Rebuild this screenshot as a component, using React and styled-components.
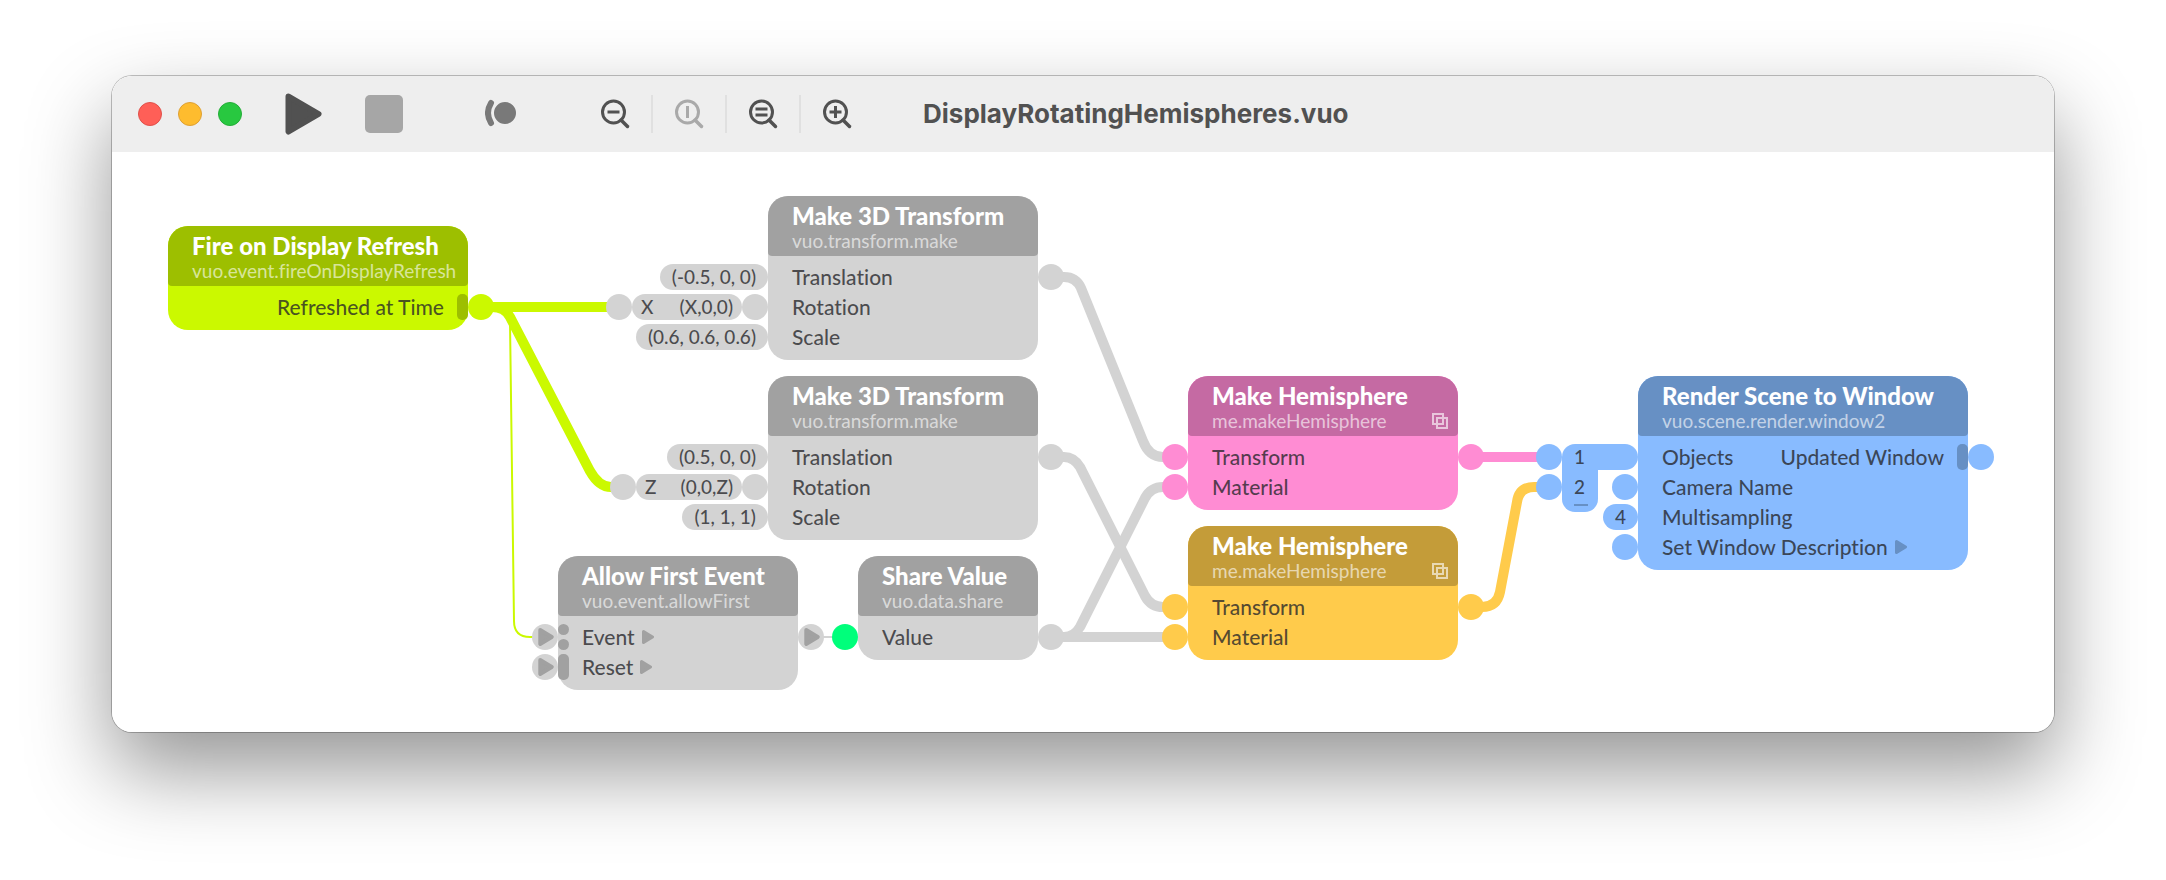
import React from "react";
import styled, { createGlobalStyle, css } from "styled-components";

const GlobalStyle = createGlobalStyle`
  * { box-sizing: border-box; }
  body { margin: 0; background: #ffffff; }
  button { margin: 0; padding: 0; border: 0; background: none; font: inherit; color: inherit; }
`;

const tints = {
  lime: { body: "#cbf900", head: "#9dbf00" },
  gray: { body: "#d3d3d3", head: "#a1a1a1" },
  pink: { body: "#ff8cd3", head: "#c56aa3" },
  amber: { body: "#ffcb4b", head: "#c49c39" },
  blue: { body: "#88bbff", head: "#6790c4" },
  green: { body: "#00ff7b", head: "#00c45e" },
};

const Page = styled.main`
  padding: 76px 112px 148px;
`;

const Window = styled.section`
  border-radius: 20px;
  overflow: clip;
  background: #ffffff;
`;

const WindowShadow = styled.div`
  border-radius: 20px;
  box-shadow: 0 0 0 1px rgba(0, 0, 0, 0.24), 0 38px 84px rgba(0, 0, 0, 0.42);
`;

const TitleBar = styled.header`
  display: flex;
  align-items: center;
  height: 76px;
  padding-left: 26px;
  background: #eeeeee;
  color: #515151;
`;

const TrafficLights = styled.div`
  display: flex;
  gap: 16px;
  margin-right: 43px;
`;

const Light = styled.button`
  width: 24px;
  height: 24px;
  border-radius: 50%;
  border: 1px solid ${(p) => p.$edge};
  background: ${(p) => p.$color};
`;

const ToolButton = styled.button`
  display: flex;
  align-items: center;
  justify-content: center;
  width: ${(p) => p.$width}px;
  height: 44px;
  color: ${(p) => p.$color || "#515151"};
`;

const RunControls = styled.div`
  display: flex;
  gap: 42px;
  margin-right: 82px;
`;

const ZoomGroup = styled.div`
  display: flex;
  margin-left: 62px;
`;

const ZoomButton = styled.button`
  display: flex;
  align-items: center;
  justify-content: center;
  width: 74px;
  height: 38px;
  border-right: 2px solid #e0e0e0;
  color: #515151;
  &:last-child { border-color: transparent; }
  &:disabled { color: #a9a9a9; }
`;

const Title = styled.h1`
  margin: 0 0 0 48px;
  font: 700 26px/32px Inter, "Liberation Sans", sans-serif;
  white-space: nowrap;
`;

const Canvas = styled.div`
  position: relative;
  min-height: 580px;
  font-family: Lato, "Open Sans", sans-serif;
  font-variant-ligatures: none;
`;

const Cables = styled.svg`
  position: absolute;
  left: 0;
  top: 0;
  overflow: visible;
  fill: none;
`;

const NodeBox = styled.article`
  position: absolute;
  left: ${(p) => p.$x}px;
  top: ${(p) => p.$y}px;
  width: ${(p) => p.$width}px;
  padding-bottom: 8px;
  border-radius: 20px;
  background: ${(p) => p.$tint.body};
`;

const NodeHead = styled.header`
  height: 60px;
  margin-bottom: 6px;
  padding: 7px 10px 0 24px;
  border-radius: 20px 20px 4px 4px;
  background: ${(p) => p.$tint.head};
  white-space: nowrap;
`;

const NodeTitle = styled.h2`
  margin: 0;
  font-size: 24px;
  line-height: 26px;
  font-weight: 900;
  color: #ffffff;
`;

const NodeClass = styled.div`
  display: flex;
  align-items: center;
  justify-content: space-between;
  font-size: 19px;
  line-height: 24px;
  color: rgba(255, 255, 255, 0.62);
`;

const Row = styled.div`
  position: relative;
  display: flex;
  justify-content: space-between;
  height: 30px;
  padding: 0 24px;
  font-size: 21px;
  line-height: 30px;
  font-weight: 500;
  white-space: nowrap;
  color: rgba(38, 38, 42, 0.78);
`;

const RowLabel = styled.span`
  display: flex;
  align-items: center;
  gap: 7px;
  ${(p) => p.$end && css`margin-left: auto;`}
`;

const Inputs = styled.div`
  position: absolute;
  right: 100%;
  top: 2px;
  display: flex;
  align-items: flex-start;
`;

const Outputs = styled.div`
  position: absolute;
  left: 100%;
  top: 2px;
  display: flex;
`;

const Port = styled.span`
  display: flex;
  flex: none;
  align-items: center;
  justify-content: center;
  width: 26px;
  height: 26px;
  padding-left: 2px;
  border-radius: 50%;
  background: ${(p) => p.$tint.body};
`;

const Pill = styled.span`
  display: flex;
  justify-content: space-between;
  width: ${(p) => (p.$width ? `${p.$width}px` : "auto")};
  height: 26px;
  padding: 0 ${(p) => (p.$width ? 9 : 12)}px;
  border-radius: 13px;
  background: ${(p) => p.$tint.body};
  font-size: 19px;
  line-height: 26px;
`;

const Door = styled.span`
  position: absolute;
  top: 2px;
  ${(p) => (p.$end ? "right: 0;" : "left: 0;")}
  width: 11px;
  height: 26px;
  border-radius: 5px;
  background: ${(p) => p.$tint.head};
`;

const SplitDoor = styled.span`
  position: absolute;
  top: 2px;
  left: 0;
  display: flex;
  flex-direction: column;
  justify-content: space-between;
  height: 26px;
  &::before, &::after {
    content: "";
    width: 11px;
    height: 11px;
    border-radius: 50%;
    background: ${(p) => p.$tint.head};
  }
`;

const ListPorts = styled.div`
  display: flex;
  flex-direction: column;
  gap: 4px;
`;

const ListBody = styled.ol`
  display: flex;
  flex-direction: column;
  gap: 4px;
  width: 36px;
  height: 68px;
  margin: 0;
  padding: 0 12px;
  list-style: none;
  border-radius: 13px 0 13px 13px;
  background: ${(p) => p.$tint.body};
  font-size: 19px;
  line-height: 26px;
  &::after {
    content: "";
    flex: none;
    width: 14px;
    height: 2px;
    background: ${(p) => p.$tint.head};
  }
`;

const ListItem = styled.li`
  height: 26px;
`;

const ListNeck = styled.span`
  width: 40px;
  height: 26px;
  border-radius: 0 13px 13px 0;
  background: ${(p) => p.$tint.body};
`;

const Arrow = ({ tint, width = 12, height = 14 }) => (
  <svg width={width} height={height} viewBox="0 0 12 14" aria-hidden="true">
    <path d="M1.5 1.5 10.5 7 1.5 12.5Z" fill={tint.head} stroke={tint.head} strokeWidth="3" strokeLinejoin="round" />
  </svg>
);

const CopyIcon = () => (
  <svg width="16" height="16" fill="none" stroke="currentColor" strokeWidth="2" aria-hidden="true">
    <path d="M1 1H11V11H1ZM5 5H15V15H5Z" />
  </svg>
);

const Magnifier = ({ children }) => (
  <svg width="30" height="32" fill="none" stroke="currentColor" strokeWidth="3" aria-hidden="true">
    <circle cx="13.5" cy="14" r="11" />
    <path d="M21 22 27.5 28.5" strokeWidth="3.5" strokeLinecap="round" />
    {children}
  </svg>
);

function Node({ x, y, width, tint, title, name, copy, children }) {
  return (
    <NodeBox $x={x} $y={y} $width={width} $tint={tint}>
      <NodeHead $tint={tint}>
        <NodeTitle>{title}</NodeTitle>
        <NodeClass>
          {name}
          {copy && <CopyIcon />}
        </NodeClass>
      </NodeHead>
      {children}
    </NodeBox>
  );
}

function TransformNode({ y, translation, variable, formula, formulaWidth, scale }) {
  const t = tints.gray;
  return (
    <Node x={656} y={y} width={270} tint={t} title="Make 3D Transform" name="vuo.transform.make">
      <Row>
        <Inputs><Pill $tint={t}>{translation}</Pill></Inputs>
        <RowLabel>Translation</RowLabel>
        <Outputs><Port $tint={t} /></Outputs>
      </Row>
      <Row>
        <Inputs>
          <Port $tint={t} />
          <Pill $tint={t} $width={formulaWidth}><span>{variable}</span><span>{formula}</span></Pill>
          <Port $tint={t} />
        </Inputs>
        <RowLabel>Rotation</RowLabel>
      </Row>
      <Row>
        <Inputs><Pill $tint={t}>{scale}</Pill></Inputs>
        <RowLabel>Scale</RowLabel>
      </Row>
    </Node>
  );
}

function HemisphereNode({ y, tint }) {
  return (
    <Node x={1076} y={y} width={270} tint={tint} title="Make Hemisphere" name="me.makeHemisphere" copy>
      <Row>
        <Inputs><Port $tint={tint} /></Inputs>
        <RowLabel>Transform</RowLabel>
        <Outputs><Port $tint={tint} /></Outputs>
      </Row>
      <Row>
        <Inputs><Port $tint={tint} /></Inputs>
        <RowLabel>Material</RowLabel>
      </Row>
    </Node>
  );
}

export default function App() {
  const { lime, gray, pink, amber, blue, green } = tints;
  return (
    <Page>
      <GlobalStyle />
      <WindowShadow>
        <Window>
          <TitleBar>
            <TrafficLights>
              <Light aria-label="Close" $color="#ff5f57" $edge="#e0504a" />
              <Light aria-label="Minimize" $color="#febc2e" $edge="#dea034" />
              <Light aria-label="Zoom window" $color="#28c840" $edge="#24ad38" />
            </TrafficLights>
            <RunControls>
              <ToolButton aria-label="Run" $width={38}>
                <svg width="38" height="44" aria-hidden="true">
                  <path d="M3.500 4.500 33.500 22 3.500 39.500Z" fill="currentColor" stroke="currentColor" strokeWidth="6" strokeLinejoin="round" />
                </svg>
              </ToolButton>
              <ToolButton aria-label="Stop" $width={38} $color="#a6a6a6">
                <svg width="38" height="38" aria-hidden="true"><rect width="38" height="38" rx="5" fill="currentColor" /></svg>
              </ToolButton>
            </RunControls>
            <ToolButton aria-label="Show Events" $width={32} $color="#797979">
              <svg width="32" height="32" fill="none" aria-hidden="true">
                <path d="M6 5Q0 15 6 25" stroke="currentColor" strokeWidth="6" strokeLinecap="round" />
                <circle cx="20" cy="15" r="12" fill="currentColor" stroke="#eeeeee" strokeWidth="2" />
              </svg>
            </ToolButton>
            <ZoomGroup>
              <ZoomButton aria-label="Zoom Out"><Magnifier><path d="M7.500 14H19.500" /></Magnifier></ZoomButton>
              <ZoomButton aria-label="Actual Size" disabled><Magnifier><path d="M13.500 8V20" /></Magnifier></ZoomButton>
              <ZoomButton aria-label="Zoom to Fit"><Magnifier><path d="M7.500 11H19.500M7.500 17H19.500" /></Magnifier></ZoomButton>
              <ZoomButton aria-label="Zoom In"><Magnifier><path d="M7.500 14H19.500M13.500 8V20" /></Magnifier></ZoomButton>
            </ZoomGroup>
            <Title>DisplayRotatingHemispheres.vuo</Title>
          </TitleBar>

          <Canvas>
            <Cables width="1" height="1" aria-hidden="true">
              <g stroke={lime.body} strokeWidth="10">
                <path d="M369 155H507" />
                <path d="M369 155H380Q393 155 398 165L478 319Q487 335 499 335H511" />
                <path d="M369 155H383Q398 155 398 170L402 469Q402 485 418 485H433" strokeWidth="2" />
              </g>
              <g stroke={gray.body} strokeWidth="10">
                <path d="M939 125H952Q964 125 969 136L1031 289Q1037 305 1051 305H1063" />
                <path d="M939 305H952Q962 305 968 315L1033 444Q1039 455 1051 455H1063" />
                <path d="M939 485H952Q962 485 968 475L1033 346Q1039 335 1051 335H1063" />
                <path d="M939 485H1063" />
                <path d="M699 485H733" strokeWidth="2" />
              </g>
              <path d="M1359 305H1437" stroke={pink.body} strokeWidth="10" />
              <path d="M1359 455H1370Q1385 455 1388 440L1405 350Q1407 335 1422 335H1437" stroke={amber.body} strokeWidth="10" />
            </Cables>

            <Node x={56} y={74} width={300} tint={lime} title="Fire on Display Refresh" name="vuo.event.fireOnDisplayRefresh">
              <Row>
                <RowLabel $end>Refreshed at Time</RowLabel>
                <Door $tint={lime} $end />
                <Outputs><Port $tint={lime} /></Outputs>
              </Row>
            </Node>

            <TransformNode y={44} translation="(-0.5, 0, 0)" variable="X" formula="(X,0,0)" formulaWidth={110} scale="(0.6, 0.6, 0.6)" />
            <TransformNode y={224} translation="(0.5, 0, 0)" variable="Z" formula="(0,0,Z)" formulaWidth={106} scale="(1, 1, 1)" />

            <Node x={446} y={404} width={240} tint={gray} title="Allow First Event" name="vuo.event.allowFirst">
              <Row>
                <Inputs><Port $tint={gray}><Arrow tint={gray} width={16} height={18} /></Port></Inputs>
                <SplitDoor $tint={gray} />
                <RowLabel>Event <Arrow tint={gray} /></RowLabel>
                <Outputs><Port $tint={gray}><Arrow tint={gray} width={16} height={18} /></Port></Outputs>
              </Row>
              <Row>
                <Inputs><Port $tint={gray}><Arrow tint={gray} width={16} height={18} /></Port></Inputs>
                <Door $tint={gray} />
                <RowLabel>Reset <Arrow tint={gray} /></RowLabel>
              </Row>
            </Node>

            <Node x={746} y={404} width={180} tint={gray} title="Share Value" name="vuo.data.share">
              <Row>
                <Inputs><Port $tint={green} /></Inputs>
                <RowLabel>Value</RowLabel>
                <Outputs><Port $tint={gray} /></Outputs>
              </Row>
            </Node>

            <HemisphereNode y={224} tint={pink} />
            <HemisphereNode y={374} tint={amber} />

            <Node x={1526} y={224} width={330} tint={blue} title="Render Scene to Window" name="vuo.scene.render.window2">
              <Row>
                <Inputs>
                  <ListPorts><Port $tint={blue} /><Port $tint={blue} /></ListPorts>
                  <ListBody $tint={blue}><ListItem>1</ListItem><ListItem>2</ListItem></ListBody>
                  <ListNeck $tint={blue} />
                </Inputs>
                <RowLabel>Objects</RowLabel>
                <RowLabel $end>Updated Window</RowLabel>
                <Door $tint={blue} $end />
                <Outputs><Port $tint={blue} /></Outputs>
              </Row>
              <Row>
                <Inputs><Port $tint={blue} /></Inputs>
                <RowLabel>Camera Name</RowLabel>
              </Row>
              <Row>
                <Inputs><Pill $tint={blue}>4</Pill></Inputs>
                <RowLabel>Multisampling</RowLabel>
              </Row>
              <Row>
                <Inputs><Port $tint={blue} /></Inputs>
                <RowLabel>Set Window Description <Arrow tint={blue} /></RowLabel>
              </Row>
            </Node>
          </Canvas>
        </Window>
      </WindowShadow>
    </Page>
  );
}
